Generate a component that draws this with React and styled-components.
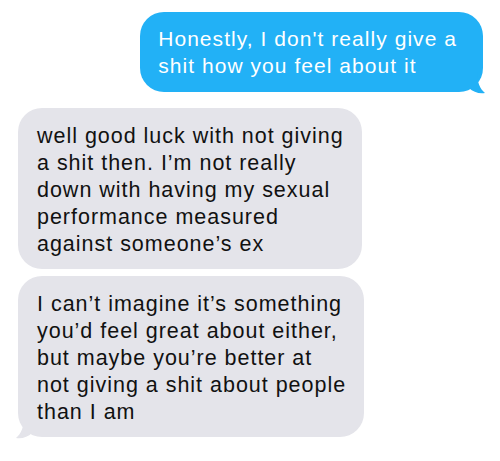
import React from "react";
import styled, { createGlobalStyle } from "styled-components";

const Global = createGlobalStyle`
  html, body { margin: 0; padding: 0; background: #fff; }
  body { font-family: "Liberation Sans", Arial, sans-serif; -webkit-font-smoothing: antialiased; }
`;

const Thread = styled.div`
  width: 500px;
  height: 461px;
  box-sizing: border-box;
  padding: 12px 17px 0 18px;
  display: flex;
  flex-direction: column;
  overflow: hidden;
`;

const Bubble = styled.div`
  position: relative;
  box-sizing: border-box;
  width: fit-content;
  align-self: ${(p) => (p.$out ? "flex-end" : "flex-start")};
  background: ${(p) => (p.$out ? "#22b1f6" : "#e4e4ea")};
  color: ${(p) => (p.$out ? "#ffffff" : "#111111")};
  border-radius: 24px;
  padding: ${(p) => (p.$out ? "13px 26px 13px 18px" : "15px 18px 11px 19px")};
  margin-top: ${(p) => p.$gap || 0}px;
  font-size: ${(p) => (p.$out ? "21px" : "21.5px")};
  line-height: 27px;
  letter-spacing: ${(p) => (p.$out ? "1.05px" : "0.98px")};
  white-space: nowrap;
`;

const Tail = styled.svg`
  position: absolute;
  bottom: -2px;
  ${(p) => (p.$out ? "right: -8px;" : "left: -8px;")}
  width: 22px;
  height: 22px;
  overflow: visible;
`;

const Line = styled.span`
  display: block;
`;

function Msg({ out, tail, gap, lines }) {
  return (
    <Bubble $out={out} $gap={gap}>
      {lines.map((l, i) => (
        <Line key={i}>{l}</Line>
      ))}
      {tail && (
        <Tail $out={out} viewBox="0 0 22 22">
          {out ? (
            <path d="M0 0 H8 C8 10 11 17 16 21 C10 22 4 20 0 16 Z" fill="#22b1f6" />
          ) : (
            <path d="M22 0 H14 C14 10 11 17 6 21 C12 22 18 20 22 16 Z" fill="#e4e4ea" />
          )}
        </Tail>
      )}
    </Bubble>
  );
}

export default function App() {
  return (
    <>
      <Global />
      <Thread>
        <Msg
          out
          tail
          lines={["Honestly, I don't really give a", "shit how you feel about it"]}
        />
        <Msg
          gap={16}
          lines={[
            "well good luck with not giving",
            "a shit then. I\u2019m not really",
            "down with having my sexual",
            "performance measured",
            "against someone\u2019s ex",
          ]}
        />
        <Msg
          gap={7}
          tail
          lines={[
            "I can\u2019t imagine it\u2019s something",
            "you\u2019d feel great about either,",
            "but maybe you\u2019re better at",
            "not giving a shit about people",
            "than I am",
          ]}
        />
      </Thread>
    </>
  );
}
